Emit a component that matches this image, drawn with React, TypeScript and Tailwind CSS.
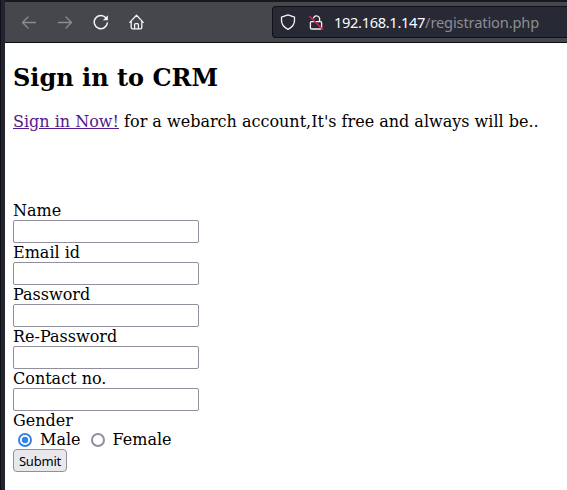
import React from "react";

const fields = [
  { label: "Name", type: "text" },
  { label: "Email id", type: "text" },
  { label: "Password", type: "password" },
  { label: "Re-Password", type: "password" },
  { label: "Contact no.", type: "text" },
];

const stroke = {
  width: 16,
  height: 16,
  viewBox: "0 0 16 16",
  fill: "none",
  strokeWidth: 1.3,
  strokeLinecap: "round" as const,
  strokeLinejoin: "round" as const,
};

function Toolbar() {
  return (
    <header className="flex h-[43px] items-center border-t-2 border-b border-t-[#17181e] border-b-[#0c0c0f] bg-[#45474d]">
      <nav className="flex w-[267px] shrink-0 items-center gap-5 pl-4">
        <svg {...stroke} stroke="#8b8c90" aria-label="Back">
          <path d="M14.5 8.5H1.5M7 3 1.5 8.5 7 14" />
        </svg>
        <svg {...stroke} stroke="#8b8c90" aria-label="Forward">
          <path d="M1.5 8.5h13M9 3 14.5 8.5 9 14" />
        </svg>
        <svg {...stroke} stroke="#f4f4f5" strokeWidth={1.5} aria-label="Reload">
          <path d="M12.9 3.800A6.600 6.600 0 1 0 14.400 8.900" />
          <path d="M14.900 1.300v5H9.900z" fill="#f4f4f5" stroke="none" />
        </svg>
        <svg {...stroke} stroke="#f4f4f5" aria-label="Home">
          <path d="M.8 8.400 7.500 1.300l6.700 7.100M2.200 7.200v6.200a1.400 1.400 0 0 0 1.400 1.400h7.800a1.400 1.400 0 0 0 1.400-1.400V7.200M5.600 14.600v-4a1 1 0 0 1 1-1h1.800a1 1 0 0 1 1 1v4" />
        </svg>
      </nav>
      <div className="flex h-8 flex-1 items-center rounded-l border border-r-0 border-[#101116] bg-[#272934] pl-[7px]">
        <svg {...stroke} stroke="#f4f4f5" className="shrink-0" aria-label="Shield">
          <path d="M8 .8 14.500 3.200v3.300c0 4-2.400 6.800-6.500 8.900-4.100-2.100-6.500-4.900-6.500-8.900V3.200z" />
        </svg>
        <svg {...stroke} stroke="#f4f4f5" className="ml-3 shrink-0" aria-label="Insecure connection">
          <path d="M5.500 3.900A3.200 3.200 0 0 1 11.600 4.500V7.500M3.600 7.700H12.400a1.200 1.200 0 0 1 1.200 1.200v4.900a1.200 1.200 0 0 1-1.200 1.200H3.600a1.200 1.200 0 0 1-1.200-1.200V8.900a1.200 1.200 0 0 1 1.200-1.200z" />
          <path d="M1.700 2.500 14.500 15.300" stroke="#e2204f" strokeWidth={1.5} />
        </svg>
        <span className="ml-[10px] whitespace-nowrap font-['Noto_Sans',sans-serif] text-[14.67px] leading-5 tracking-[-0.15px] text-[#8d8e94]">
          <span className="tracking-[-0.35px] text-[#fbfbfe]">192.168.1.147</span>/registration.php
        </span>
      </div>
    </header>
  );
}

function Choice({ label, checked }: { label: string; checked?: boolean }) {
  return (
    <label className="flex h-[19px] items-center">
      <input
        type="radio"
        name="gender"
        defaultChecked={checked}
        className="mt-px mb-px size-[14px] shrink-0 appearance-none rounded-full border-2 border-[#8f8f9d] bg-white checked:border-[#3584e4] checked:bg-[radial-gradient(circle,#3584e4_3px,#fff_3.6px)]"
      />
      <span className="ml-2">{label}</span>
    </label>
  );
}

export default function App() {
  return (
    <div className="flex h-[490px] w-[567px] overflow-hidden bg-white">
      <div className="w-[5px] shrink-0 border-l border-[#101116] bg-[#22242f]" />
      <div className="min-w-0 flex-1">
        <Toolbar />
        <main className="px-2 pt-[21px] font-['DejaVu_Serif',serif] text-base leading-[19px] text-black">
          <h2 className="text-2xl leading-7 font-bold">Sign in to CRM</h2>
          <p className="mt-5 whitespace-nowrap">
            <a href="#signin" className="text-[#551a8b] underline">
              Sign in Now!
            </a>{" "}
            for a webarch account,It's free and always will be..
          </p>
          <form className="mt-[70px]">
            {fields.map((f) => (
              <label key={f.label} className="block">
                <span className="block">{f.label}</span>
                <input
                  type={f.type}
                  className="block h-[23px] w-[186px] rounded-[2px] border border-[#8f8f9d] bg-white"
                />
              </label>
            ))}
            <div>Gender</div>
            <div className="flex gap-[10px] pl-[5px]">
              <Choice label="Male" checked />
              <Choice label="Female" />
            </div>
            <button
              type="button"
              className="block h-[23px] w-[54px] rounded border border-[#8f8f9d] bg-[#e9e9ed] pt-px font-['Noto_Sans',sans-serif] text-[13px] leading-[21px] tracking-[-0.2px]"
            >
              Submit
            </button>
          </form>
        </main>
      </div>
    </div>
  );
}
